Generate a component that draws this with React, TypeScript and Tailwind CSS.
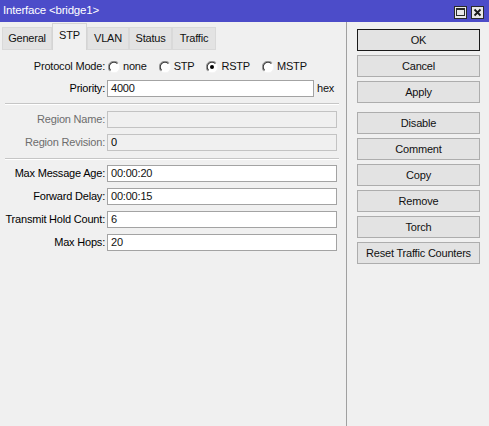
import React from 'react';

const tabs = [
  { name: 'General', w: 'w-[50px]' },
  { name: 'STP', w: 'w-[35px]' },
  { name: 'VLAN', w: 'w-[42px]' },
  { name: 'Status', w: 'w-[43px]' },
  { name: 'Traffic', w: 'w-[44px]' },
];

function Radio({ checked }: { checked?: boolean }) {
  return (
    <svg width="12" height="12" viewBox="0 0 12 12" className="shrink-0">
      <circle cx="6" cy="6" r="5.5" fill="#ffffff" />
      <path d="M1.8 10.2 A5.5 5.5 0 0 1 10.2 1.8" fill="none" stroke="#9a9a9a" strokeWidth="1" />
      <path d="M2.6 9.4 A4.4 4.4 0 0 1 9.4 2.6" fill="none" stroke="#3c3c3c" strokeWidth="1.2" />
      <path d="M10.2 1.8 A5.5 5.5 0 0 1 1.8 10.2" fill="none" stroke="#f4f4f4" strokeWidth="1" />
      {checked && <circle cx="6" cy="6" r="2" fill="#000000" />}
    </svg>
  );
}

function Field({
  label,
  value,
  disabled,
  suffix,
}: {
  label: string;
  value: string;
  disabled?: boolean;
  suffix?: string;
}) {
  return (
    <div className="flex items-center h-[17px]">
      <div className={`w-[107px] shrink-0 text-right pr-[2px] ${disabled ? 'text-[#6d6d6d]' : 'text-black'}`}>
        {label}
      </div>
      {suffix ? (
        <>
          <div className="w-[207px] h-[17px] bg-white border border-[#a3a3a3] px-[3px] leading-[15px]">{value}</div>
          <span className="ml-[3px]">{suffix}</span>
        </>
      ) : (
        <div
          className={`w-[230px] h-[17px] border px-[3px] leading-[15px] ${
            disabled ? 'bg-[#f0f0f0] border-[#c3c3c3] text-black' : 'bg-white border-[#a3a3a3]'
          }`}
        >
          {value}
        </div>
      )}
    </div>
  );
}

function Btn({ label, primary }: { label: string; primary?: boolean }) {
  return (
    <div
      className={`w-[123px] h-[22px] flex items-center justify-center bg-[#e3e3e3] border ${
        primary ? 'border-[#1a1a1a]' : 'border-[#adadad]'
      }`}
    >
      {label}
    </div>
  );
}

export default function App() {
  return (
    <div
      className="w-[489px] h-[426px] bg-[#f0f0f0] flex flex-col text-[11px] tracking-[-0.2px] text-[#111111] overflow-hidden"
      style={{ fontFamily: '"Liberation Sans", Arial, sans-serif' }}
    >
      {/* title bar */}
      <div className="h-[22px] bg-[#4c4cc9] flex items-center justify-between pl-[3px] pr-[5px] shrink-0">
        <span className="text-white text-[11.5px]">Interface &lt;bridge1&gt;</span>
        <div className="flex gap-[4px] mt-[2px]">
          <div className="w-[13px] h-[13px] bg-[#e8e8e8] border border-[#2a2a2a] flex items-center justify-center">
            <div className="w-[9px] h-[8px] border border-[#2a2a2a] border-t-2" />
          </div>
          <div className="w-[13px] h-[13px] bg-[#e8e8e8] border border-[#2a2a2a] flex items-center justify-center">
            <svg width="9" height="9" viewBox="0 0 9 9">
              <path d="M1.5 1.5 L7.5 7.5 M7.5 1.5 L1.5 7.5" stroke="#1a1a1a" strokeWidth="1.8" />
            </svg>
          </div>
        </div>
      </div>

      <div className="flex flex-1">
        {/* left panel */}
        <div className="w-[347px] shrink-0 border-r border-[#a0a0a0] flex flex-col">
          <div className="flex items-end h-[28px] pl-[2px]">
            {tabs.map((t) =>
              t.name === 'STP' ? (
                <div
                  key={t.name}
                  className={`${t.w} h-[27px] bg-[#f0f0f0] border border-b-0 border-[#d4d4d4] flex items-center justify-center pb-[3px]`}
                >
                  {t.name}
                </div>
              ) : (
                <div
                  key={t.name}
                  className={`${t.w} h-[23px] bg-[#e3e3e3] border border-[#d9d9d9] flex items-center justify-center`}
                >
                  {t.name}
                </div>
              )
            )}
          </div>

          <div className="flex flex-col pt-[8px]">
            <div className="flex items-center h-[17px]">
              <div className="w-[107px] shrink-0 text-right pr-[2px]">Protocol Mode:</div>
              <div className="flex items-center gap-[3px] ml-[1px]">
                <Radio />
                <span>none</span>
              </div>
              <div className="flex items-center gap-[3px] ml-[12px]">
                <Radio />
                <span>STP</span>
              </div>
              <div className="flex items-center gap-[3px] ml-[12px]">
                <Radio checked />
                <span>RSTP</span>
              </div>
              <div className="flex items-center gap-[3px] ml-[12px]">
                <Radio />
                <span>MSTP</span>
              </div>
            </div>

            <div className="mt-[5px]">
              <Field label="Priority:" value="4000" suffix="hex" />
            </div>

            <div className="mt-[6px] ml-[5px] mr-[7px] h-[2px] border-t border-[#c6c6c6] border-b border-b-white" />

            <div className="flex flex-col gap-[6px] mt-[6px]">
              <Field label="Region Name:" value="" disabled />
              <Field label="Region Revision:" value="0" disabled />
            </div>

            <div className="mt-[7px] ml-[5px] mr-[7px] h-[2px] border-t border-[#c6c6c6] border-b border-b-white" />

            <div className="flex flex-col gap-[6px] mt-[5px]">
              <Field label="Max Message Age:" value="00:00:20" />
              <Field label="Forward Delay:" value="00:00:15" />
              <Field label="Transmit Hold Count:" value="6" />
              <Field label="Max Hops:" value="20" />
            </div>
          </div>
        </div>

        {/* right buttons */}
        <div className="flex flex-col pl-[10px] pt-[7px]">
          <div className="flex flex-col gap-[4px]">
            <Btn label="OK" primary />
            <Btn label="Cancel" />
            <Btn label="Apply" />
          </div>
          <div className="flex flex-col gap-[4px] mt-[9px]">
            <Btn label="Disable" />
            <Btn label="Comment" />
            <Btn label="Copy" />
            <Btn label="Remove" />
            <Btn label="Torch" />
            <Btn label="Reset Traffic Counters" />
          </div>
        </div>
      </div>
    </div>
  );
}
